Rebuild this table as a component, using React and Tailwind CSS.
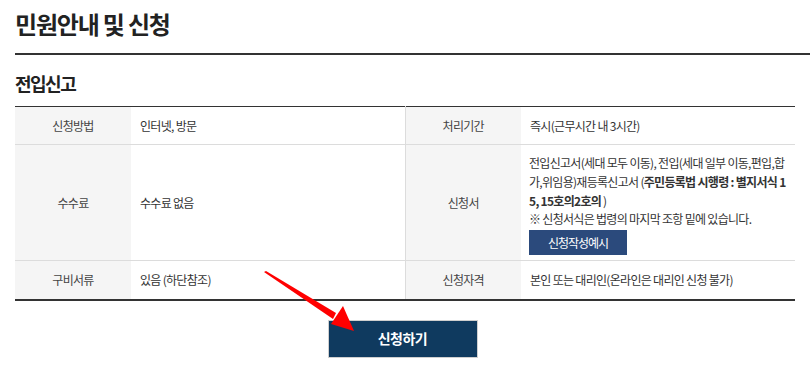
import React from "react";

const FONT = { fontFamily: '"Noto Sans CJK KR", "Noto Sans", sans-serif' };

function Th({ children }) {
  return (
    <th className="w-[116px] bg-[#f5f5f5] text-center align-middle font-normal text-[#444]">
      {children}
    </th>
  );
}

function Td({ children, divider, className = "" }) {
  return (
    <td className={`w-[274px] px-[9px] align-middle text-left text-[#333] ${divider ? "border-r border-[#dcdcdc]" : ""} ${className}`}>
      {children}
    </td>
  );
}

export default function App() {
  return (
    <div className="relative w-[810px] h-[367px] bg-white overflow-hidden" style={FONT}>
      {/* page heading */}
      <div className="ml-[15px] h-[55px] border-b-2 border-[#333] pt-[8px]">
        <h2 className="text-[24px] leading-[32px] font-bold tracking-[-1.2px] text-[#222]">
          민원안내 및 신청
        </h2>
      </div>

      <div className="px-[15px]">
        <h3 className="mt-[16px] mb-[11px] text-[18px] leading-[24px] font-bold tracking-[-1.5px] text-[#222]">
          전입신고
        </h3>

        <table className="w-[780px] border-collapse border-t border-b-2 border-[#333] text-[12px] tracking-[-0.7px]">
          <tbody>
            <tr className="h-[38px] border-b border-[#dcdcdc]">
              <Th>신청방법</Th>
              <Td divider>인터넷, 방문</Td>
              <Th>처리기간</Th>
              <Td>즉시(근무시간 내 3시간)</Td>
            </tr>
            <tr className="h-[114px] border-b border-[#dcdcdc]">
              <Th>수수료</Th>
              <Td divider>수수료 없음</Td>
              <Th>신청서</Th>
              <Td className="pt-[8px] pb-[5px] !px-[8px]">
                <p className="leading-[19px] whitespace-nowrap">전입신고서(세대 모두 이동), 전입(세대 일부 이동,편입,합</p>
                <p className="leading-[19px] whitespace-nowrap">
                  가,위임용)재등록신고서 (<b>주민등록법 시행령 : 별지서식 1</b>
                </p>
                <p className="leading-[19px] whitespace-nowrap">
                  <b>5, 15호의2호의</b> )
                </p>
                <p className="leading-[17px] whitespace-nowrap">※ 신청서식은 법령의 마지막 조항 밑에 있습니다.</p>
                <button className="mt-[3px] w-[98px] h-[25px] bg-[#2b4a7c] text-white text-[12px] tracking-[-1px]">
                  신청작성예시
                </button>
              </Td>
            </tr>
            <tr className="h-[39px]">
              <Th>구비서류</Th>
              <Td divider>있음 (하단참조)</Td>
              <Th>신청자격</Th>
              <Td>본인 또는 대리인(온라인은 대리인 신청 불가)</Td>
            </tr>
          </tbody>
        </table>

        <div className="flex justify-center pr-[5px] mt-[19px]">
          <button className="w-[150px] h-[38px] bg-[#0f3a5f] border border-[#cfcfcf] text-white text-[14px] font-bold tracking-[-0.5px]">
            신청하기
          </button>
        </div>
      </div>

      {/* red pointer arrow */}
      <svg className="absolute left-0 top-0 pointer-events-none" width="810" height="367">
        <polygon points="264,272 266,271 336,313 333,319" fill="#ff0000" />
        <polygon points="331,324 343,306 354,331" fill="#ff0000" />
      </svg>
    </div>
  );
}
